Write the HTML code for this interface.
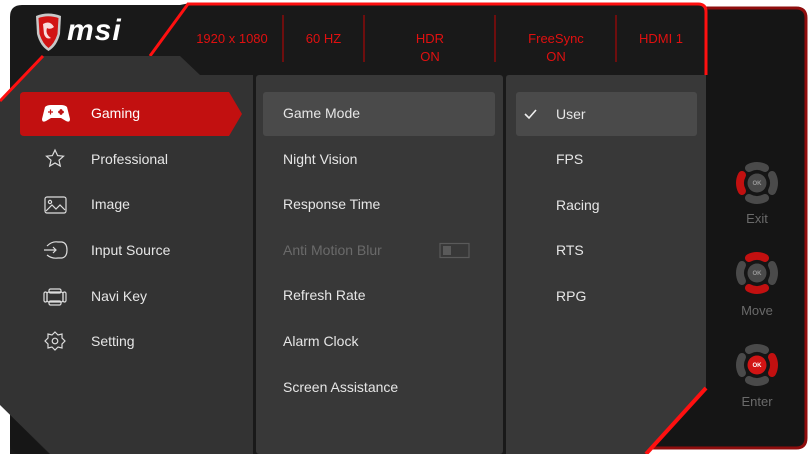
<!DOCTYPE html>
<html><head><meta charset="utf-8"><style>
html,body{margin:0;padding:0;background:#fff;}
body{width:808px;height:454px;position:relative;overflow:hidden;font-family:"Liberation Sans",sans-serif;}
svg{position:absolute;left:0;top:0;}
.t{position:absolute;font-size:14px;color:#e6e6e6;white-space:nowrap;line-height:16px;}
.h{position:absolute;font-size:13px;color:#e01010;text-align:center;line-height:18px;white-space:nowrap;}
.n{position:absolute;font-size:13px;color:#6a6a6a;text-align:center;width:60px;}
</style></head><body>
<svg width="808" height="454" viewBox="0 0 808 454">
  <path d="M700 8 H796 Q806 8 806 18 V438 Q806 448 796 448 H640 L700 380 Z" fill="#151515" stroke="#8e0d0d" stroke-width="3"/>
  <path d="M22 5 H180 L190 3 H698 Q706 3 706 11 V390 L648 454 H10 V17 Q10 5 22 5 Z" fill="#191919"/>
  <path d="M150 56 L188 4 H698 Q706 4 706 12 V75" fill="none" stroke="#ff1010" stroke-width="3"/>
  <path d="M43 56 H180 L200 75 H253 V454 H50 L0 405 V100 Z" fill="#333"/>
  <path d="M10 415 L48 454 H22 Q10 454 10 442 Z" fill="#161616"/>
  <path d="M0 101 L43 56" stroke="#ff1010" stroke-width="3"/>
  <rect x="256" y="75" width="247" height="379" fill="#383838" rx="3"/>
  <path d="M509 75 H706 V390 L648 454 H506 V78 Q506 75 509 75 Z" fill="#383838"/>
  <path d="M706 388 L646 454" stroke="#ff1010" stroke-width="4"/>
  <g stroke="#8a0a0a" stroke-width="1.5">
    <line x1="283" y1="15" x2="283" y2="62"/><line x1="364" y1="15" x2="364" y2="62"/>
    <line x1="495" y1="15" x2="495" y2="62"/><line x1="616" y1="15" x2="616" y2="62"/>
  </g>
  <path d="M24 92 H229 L242 114 L229 136 H24 Q20 136 20 132 V96 Q20 92 24 92 Z" fill="#c21010"/>
  <rect x="263" y="92" width="232" height="44" rx="3" fill="#4a4a4a"/>
  <rect x="516" y="92" width="181" height="44" rx="3" fill="#4a4a4a"/>
  <path d="M36 16 Q48 11 61 16 L60 34 Q57 46 48.5 51 Q40 46 37 34 Z" fill="#c8c8c8"/>
  <path d="M38.5 18 Q48 14.5 58.5 18 L57.5 34 Q54.5 43.5 48.5 48 Q42.5 43.5 39.5 34 Z" fill="#d21414"/>
  <path d="M43 24 Q50 20 54 27 Q50 30 47 28 Q45 34 51 38 Q46 40 44 34 Z" fill="#fff" opacity=".85"/>
  <text x="67" y="40" font-family="Liberation Sans" font-weight="bold" font-style="italic" font-size="30" letter-spacing="1" fill="#fff">msi</text>
  <g fill="none" stroke="#ddd" stroke-width="1.2">
    <path d="M55 150 L57.6 155.6 L63.5 156.2 L59 160.2 L60.3 166 L55 163 L49.7 166 L51 160.2 L46.5 156.2 L52.4 155.6 Z"/>
    <rect x="45" y="197" width="21" height="16" rx="2"/><circle cx="50" cy="202" r="1.6"/><path d="M46 211 L52 205 L56 209 L60 205 L65 210"/>
    <path d="M47 246 Q52 241 58 242 H62 Q67 243 67 250 Q67 257 62 258 H58 Q52 259 47 255 M44 250 H56 M53 247 L56 250 L53 253"/>
    <rect x="49" y="289" width="12" height="4" rx="1.5"/><rect x="49" y="301" width="12" height="4" rx="1.5"/><rect x="47" y="292" width="16" height="10" rx="2"/><rect x="44" y="292" width="3" height="10" rx="1.5"/><rect x="63" y="292" width="3" height="10" rx="1.5"/>
    <path d="M55 332 L58 335 L62 334 L62 338 L65 341 L62 344 L62 348 L58 347 L55 350 L52 347 L48 348 L48 344 L45 341 L48 338 L48 334 L52 335 Z"/><circle cx="55" cy="341" r="2.8"/>
  </g>
  <path d="M45 107 Q47 105 51 105 H61 Q65 105 67 107 L70 119 Q70 123 66 121 L61 118 H51 L46 121 Q42 123 42 119 Z" fill="#fff"/>
  <g stroke="#c21010" stroke-width="1.2"><path d="M48 112 H53 M50.5 109.5 V114.5"/><circle cx="61" cy="110.5" r=".8"/><circle cx="61" cy="113.5" r=".8"/><circle cx="59.5" cy="112" r=".8"/><circle cx="62.5" cy="112" r=".8"/></g>
  <path d="M525 114 L529 118 L536 110" fill="none" stroke="#eee" stroke-width="1.6"/>
  <rect x="440" y="243.5" width="29" height="14" fill="none" stroke="#5a5a5a" stroke-width="1.2"/>
  <rect x="443" y="246" width="8" height="9" fill="#5a5a5a"/>
  <g font-family="Liberation Sans" font-size="6" font-weight="bold" text-anchor="middle" fill="none" stroke-width="8" stroke-linecap="round">
    <g transform="translate(757,183)">
      <path d="M-8 -15 A17 17 0 0 1 8 -15" stroke="#4a4a4a"/>
      <path d="M-8 15 A17 17 0 0 0 8 15" stroke="#4a4a4a"/>
      <path d="M-15 -8 A17 17 0 0 0 -15 8" stroke="#c21010"/>
      <path d="M15 -8 A17 17 0 0 1 15 8" stroke="#4a4a4a"/>
      <circle r="9.5" fill="#4a4a4a" stroke="none"/><text y="2" fill="#999" stroke="none">OK</text>
    </g>
    <g transform="translate(757,273)">
      <path d="M-8 -15 A17 17 0 0 1 8 -15" stroke="#c21010"/>
      <path d="M-8 15 A17 17 0 0 0 8 15" stroke="#c21010"/>
      <path d="M-15 -8 A17 17 0 0 0 -15 8" stroke="#4a4a4a"/>
      <path d="M15 -8 A17 17 0 0 1 15 8" stroke="#4a4a4a"/>
      <circle r="9.5" fill="#4a4a4a" stroke="none"/><text y="2" fill="#999" stroke="none">OK</text>
    </g>
    <g transform="translate(757,365)">
      <path d="M-8 -15 A17 17 0 0 1 8 -15" stroke="#4a4a4a"/>
      <path d="M-8 15 A17 17 0 0 0 8 15" stroke="#4a4a4a"/>
      <path d="M-15 -8 A17 17 0 0 0 -15 8" stroke="#4a4a4a"/>
      <path d="M15 -8 A17 17 0 0 1 15 8" stroke="#c21010"/>
      <circle r="9.5" fill="#d21414" stroke="none"/><text y="2" fill="#fff" stroke="none">OK</text>
    </g>
  </g>
</svg>
<div class="h" style="left:182px;width:100px;top:30px">1920 x 1080</div>
<div class="h" style="left:283px;width:81px;top:30px">60 HZ</div>
<div class="h" style="left:380px;width:100px;top:30px">HDR<br>ON</div>
<div class="h" style="left:505px;width:102px;top:30px">FreeSync<br>ON</div>
<div class="h" style="left:616px;width:90px;top:30px">HDMI 1</div>

<div class="t" style="left:91px;top:105px;color:#fff">Gaming</div>
<div class="t" style="left:91px;top:151px">Professional</div>
<div class="t" style="left:91px;top:196px">Image</div>
<div class="t" style="left:91px;top:242px">Input Source</div>
<div class="t" style="left:91px;top:288px">Navi Key</div>
<div class="t" style="left:91px;top:333px">Setting</div>

<div class="t" style="left:283px;top:105px">Game Mode</div>
<div class="t" style="left:283px;top:151px">Night Vision</div>
<div class="t" style="left:283px;top:196px">Response Time</div>
<div class="t" style="left:283px;top:242px;color:#6a6a6a">Anti Motion Blur</div>
<div class="t" style="left:283px;top:287px">Refresh Rate</div>
<div class="t" style="left:283px;top:333px">Alarm Clock</div>
<div class="t" style="left:283px;top:379px">Screen Assistance</div>

<div class="t" style="left:556px;top:106px">User</div>
<div class="t" style="left:556px;top:151px">FPS</div>
<div class="t" style="left:556px;top:197px">Racing</div>
<div class="t" style="left:556px;top:242px">RTS</div>
<div class="t" style="left:556px;top:288px">RPG</div>

<div class="n" style="left:727px;top:211px">Exit</div>
<div class="n" style="left:727px;top:303px">Move</div>
<div class="n" style="left:727px;top:394px">Enter</div>
</body></html>
